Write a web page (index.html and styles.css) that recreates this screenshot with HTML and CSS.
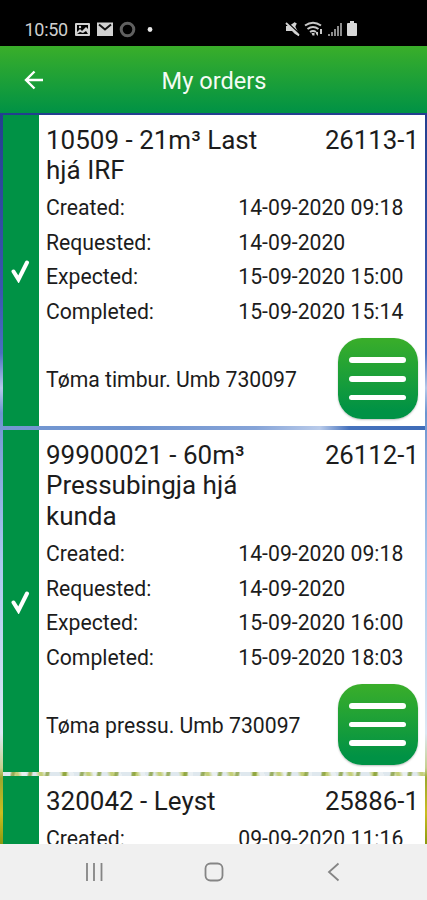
FILE: index.html
```
<!DOCTYPE html>
<html lang="en">

	<head>
		<meta charset="UTF-8">
		<title>My orders</title>
		<link rel="stylesheet" href="styles.css">
	</head>

	<body>
		<div class="status">
			<span class="time">10:50</span>
			<svg class="left-icons" width="80" height="18" viewBox="0 0 80 18">
				<path fill="#d2d2d2" fill-rule="evenodd" d="M1 2h13q1 0 1 1v11q0 1-1 1H1q-1 0-1-1V3q0-1 1-1zM2 4v7l3-3 2 2 4-4 2 2V4zM2 13h11l-2-3-3 2-3-1z" />
				<circle cx="5" cy="6" r="1.2" fill="#d2d2d2" />
				<path fill="#d2d2d2" d="M22 1.500h16v13.500H22z" />
				<path fill="none" stroke="#111" stroke-width="2" d="M24 3.500l6 5 6-5" />
				<circle cx="52.500" cy="8.500" r="6.300" fill="none" stroke="#606060" stroke-width="3" />
				<circle cx="75" cy="8.500" r="2.400" fill="#e8e8e8" />
			</svg>
			<svg class="right-icons" width="74" height="18" viewBox="0 0 74 18">
				<path fill="#d2d2d2" d="M1 5h3l6-4v4l4 8v2l-4-2-3-3H1z" />
				<path fill="none" stroke="#000" stroke-width="1.200" d="M2 1l13 12" />
				<path fill="none" stroke="#d2d2d2" stroke-width="1.800" d="M1 2l13 12.500M9 6l2-4" />
				<path fill="none" stroke="#c8c8c8" stroke-width="2" d="M20 4.500q8-5.500 16 0M22.500 8q5.500-4 11 0M25 11q3-2 6 0" />
				<path fill="#c8c8c8" d="M26.500 12h3v2.500h-2zM31 11h2v4l-2-2zM35 8h2v5h-2z" />
				<path fill="#8b8b8b" d="M43 13h2v2h-2zM46 11h2v4h-2zM49 8h2v7h-2zM52 5h2v10h-2zM55 2h2v13h-2z" />
				<path fill="#d8d8d8" d="M65 0h4v2h2q1 0 1 1v11q0 1-1 1h-8q-1 0-1-1V3q0-1 1-1h2z" />
			</svg>
		</div>
		<div class="header">
			<svg class="back" width="20" height="20" viewBox="0 0 20 20">
				<path d="M19 10H2M10.500 1.500L2 10l8.500 8.500" />
			</svg>
			<h1>My orders</h1>
		</div>
		<div class="list">
			<div class="order">
				<div class="done">
					<svg width="20" height="25" viewBox="0 0 20 25"><path d="M2.500 13.500l5 8 8.500-17" /></svg>
				</div>
				<div class="content">
					<div class="title">
						<h2>10509 - 21m³ Last hjá IRF</h2>
						<span>26113-1</span>
					</div>
					<ul>
						<li><span>Created:</span><b>14-09-2020 09:18</b></li>
						<li><span>Requested:</span><b>14-09-2020</b></li>
						<li><span>Expected:</span><b>15-09-2020 15:00</b></li>
						<li><span>Completed:</span><b>15-09-2020 15:14</b></li>
					</ul>
					<div class="bottom">
						<p>Tøma timbur. Umb 730097</p>
						<a class="menu" href="#"><i></i><i></i><i></i></a>
					</div>
				</div>
			</div>
			<div class="order grass">
				<div class="done">
					<svg width="20" height="25" viewBox="0 0 20 25"><path d="M2.500 13.500l5 8 8.500-17" /></svg>
				</div>
				<div class="content">
					<div class="title">
						<h2>99900021 - 60m³ Pressubingja hjá kunda</h2>
						<span>26112-1</span>
					</div>
					<ul>
						<li><span>Created:</span><b>14-09-2020 09:18</b></li>
						<li><span>Requested:</span><b>14-09-2020</b></li>
						<li><span>Expected:</span><b>15-09-2020 16:00</b></li>
						<li><span>Completed:</span><b>15-09-2020 18:03</b></li>
					</ul>
					<div class="bottom">
						<p>Tøma pressu. Umb 730097</p>
						<a class="menu" href="#"><i></i><i></i><i></i></a>
					</div>
				</div>
			</div>
			<div class="order">
				<div class="done"></div>
				<div class="content">
					<div class="title">
						<h2>320042 - Leyst</h2>
						<span>25886-1</span>
					</div>
					<ul>
						<li><span>Created:</span><b>09-09-2020 11:16</b></li>
					</ul>
				</div>
			</div>
		</div>
		<div class="nav">
			<svg width="20" height="20" viewBox="0 0 20 20"><path d="M3 1v18M10 1v18M17.500 1v18" /></svg>
			<svg width="20" height="20" viewBox="0 0 20 20"><rect x="1.500" y="1.500" width="17" height="17" rx="5" /></svg>
			<svg width="20" height="20" viewBox="0 0 20 20"><path d="M14.500 1.500L5 10l9.500 8.500" /></svg>
		</div>
	</body>

</html>
```
FILE: styles.css
```
body,
h1,
h2,
p,
ul {
	margin: 0;
	padding: 0;
}

li {
	list-style: none;
}

body {
	height: 900px;
	display: flex;
	flex-direction: column;
	overflow: hidden;
	font-family: Roboto, "Liberation Sans", sans-serif;
	color: #1c1c1c;
}

.status {
	height: 46px;
	flex: none;
	box-sizing: border-box;
	padding: 20.5px 68px 0 24.5px;
	background: #000;
	display: flex;
}

.status .time {
	width: 50.5px;
	font-size: 18px;
	line-height: 17px;
	letter-spacing: -0.3px;
	color: #cfcfcf;
}

.status .right-icons {
	margin-left: auto;
}

.header {
	height: 67px;
	flex: none;
	box-sizing: border-box;
	padding: 1px 24px 0;
	background: linear-gradient(#3aae2a, #009245);
	display: flex;
	align-items: center;
}

.header h1 {
	flex: 1;
	margin-right: 19px;
	padding-top: 2px;
	font-size: 23.6px;
	line-height: 28px;
	font-weight: normal;
	text-align: center;
	color: #f4fbf4;
}

.back path {
	fill: none;
	stroke: #fff;
	stroke-width: 2.4;
}

.list {
	height: 731px;
	flex: none;
	box-sizing: border-box;
	padding: 2px 2px 0 3px;
	overflow: hidden;
	/* sky, clouds and grass behind the cards */
	background: linear-gradient(#233f8f 0, #3a56b0 180px, #4a6fc0 240px, #b4c8ea 275px, #6b94d0 300px, #7c9fd6 330px, #aac8ee 450px, #c4d8f0 540px, #dce8f4 620px, #c5cf8e 655px, #9aa82e 665px, #c9bd20 700px, #8a9a10 731px);
}

.order {
	display: flex;
	position: relative;
	margin-bottom: 4px;
	background: #fff;
}

/* strip of the photo between two cards */
.order::after {
	content: "";
	position: absolute;
	left: 0;
	right: 0;
	bottom: -4px;
	height: 4px;
	background: linear-gradient(90deg, #7498d2, #6f93cf 30%, #86a4d8 60%, #b9cbea 75%, #4672bd 82%, #3f6cb8);
}

.order.grass::after {
	background:
		repeating-linear-gradient(100deg, transparent 0 7px, rgba(124, 150, 40, .7) 9px 11px, transparent 13px 17px),
		repeating-linear-gradient(75deg, #dfe8ee 0 9px, #c4cf78 13px 15px, #e9eff2 19px 23px);
}

.order .done {
	width: 36px;
	flex: none;
	background: #009245;
	display: flex;
	align-items: center;
	justify-content: center;
}

.done path {
	fill: none;
	stroke: #fff;
	stroke-width: 4;
	stroke-linecap: round;
}

.order .content {
	flex: 1;
	padding: 9.5px 7px 7.2px 7px;
}

.title {
	display: flex;
	justify-content: space-between;
	font-size: 26px;
	line-height: 30.5px;
	margin-bottom: 5.6px;
}

.title h2 {
	width: 230px;
	font-size: 26px;
	font-weight: normal;
}

.title span {
	font-size: 25.8px;
	margin-right: -1px;
}

.content li {
	display: flex;
	height: 34.7px;
	line-height: 34.7px;
	font-size: 21.2px;
}

.content li span {
	width: 192.3px;
}

.content li b {
	font-weight: normal;
}

.bottom {
	display: flex;
	align-items: center;
	justify-content: space-between;
	padding-top: 8.4px;
	font-size: 21.2px;
}

.bottom p {
	padding-top: 2px;
}

.menu {
	width: 80.5px;
	height: 81px;
	box-sizing: border-box;
	padding: 0 11.7px;
	border-radius: 24px;
	background: linear-gradient(#3aae2a, #009245 90%);
	box-shadow: 0 1px 2px rgba(0, 0, 0, .25);
	display: flex;
	flex-direction: column;
	justify-content: center;
	gap: 13px;
}

.menu i {
	height: 5.6px;
	border-radius: 3px;
	background: #fff;
}

.nav {
	height: 56px;
	flex: none;
	background: #f0f0f0;
	display: flex;
	align-items: center;
	justify-content: center;
	gap: 100px;
}

.nav svg {
	fill: none;
	stroke: #858585;
	stroke-width: 1.8;
}
```
